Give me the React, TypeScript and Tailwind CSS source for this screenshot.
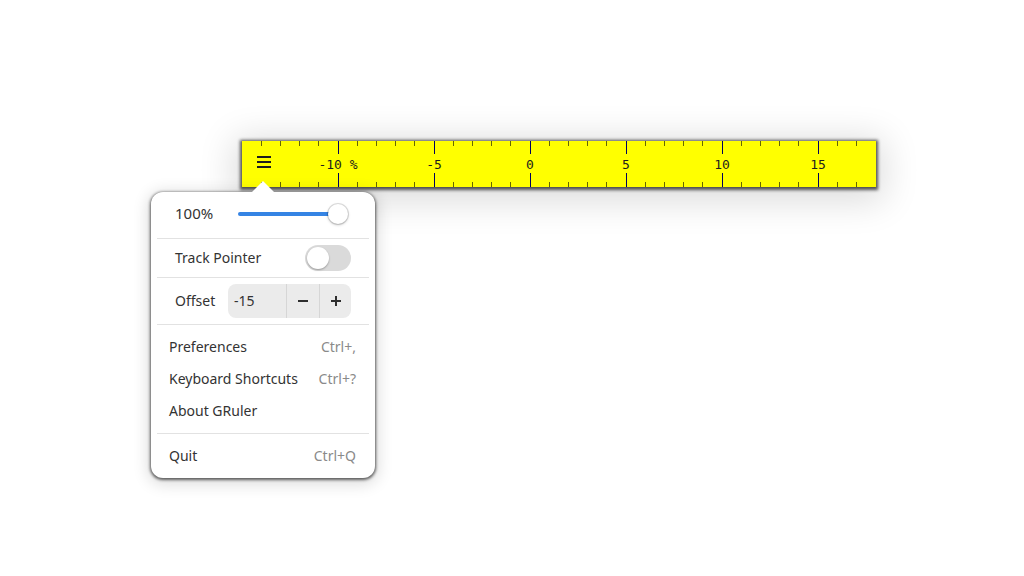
import React from "react";

const UNIT = 19.2;
const ZERO = 288;

function RulerScale() {
  const ticks = [];
  for (let k = -14; k <= 17; k++) {
    const x = ZERO + k * UNIT;
    const major = k % 5 === 0;
    ticks.push(
      <g key={k}>
        <line
          x1={x}
          x2={x}
          y1={0}
          y2={major ? 13 : 5}
          stroke={major ? "#000060" : "rgba(0,0,0,0.6)"}
          strokeWidth={1}
        />
        <line
          x1={x}
          x2={x}
          y1={major ? 32 : 41}
          y2={46}
          stroke={major ? "#000060" : "rgba(0,0,0,0.6)"}
          strokeWidth={1}
        />
      </g>,
    );
  }
  const labels = [
    { v: -10, t: "-10 %" },
    { v: -5, t: "-5" },
    { v: 0, t: "0" },
    { v: 5, t: "5" },
    { v: 10, t: "10" },
    { v: 15, t: "15" },
  ];
  return (
    <svg
      className="absolute inset-0"
      width={634}
      height={46}
      viewBox="0 0 634 46"
      shapeRendering="crispEdges"
    >
      {ticks}
      {labels.map((l) => (
        <rect
          key={"bg" + l.v}
          x={ZERO + l.v * UNIT - l.t.length * 4 - 1}
          y={14}
          width={l.t.length * 8 + 2}
          height={18}
          fill="#ffff00"
        />
      ))}
      {labels.map((l) => (
        <text
          key={l.v}
          x={ZERO + l.v * UNIT}
          y={28}
          textAnchor="middle"
          fontFamily="'DejaVu Sans Mono', monospace"
          fontSize={13}
          fill="#1e1e1e"
        >
          {l.t}
        </text>
      ))}
    </svg>
  );
}

function Separator() {
  return <div className="h-px bg-[#e2e2e2]" />;
}

function MenuItem({ label, accel }: { label: string; accel?: string }) {
  return (
    <div className="flex items-center justify-between h-[32px] pl-[12px] pr-[13px] pb-[2px] rounded-[6px]">
      <span>{label}</span>
      {accel && <span className="text-[#8a8a8a]">{accel}</span>}
    </div>
  );
}

export default function App() {
  return (
    <div
      className="relative w-[1024px] h-[576px] bg-white overflow-hidden text-[14px] text-[#333333]"
      style={{ fontFamily: "'Noto Sans', sans-serif" }}
    >
      <div className="pt-[141px] pl-[242px]">
        <div className="relative w-[634px] h-[46px] bg-[#ffff00] shadow-[0_1px_3px_2px_rgba(0,0,0,0.65),0_6px_36px_8px_rgba(0,0,0,0.14)]">
          <RulerScale />
          <div className="relative flex flex-col gap-[3px] pl-[15px] pt-[15px]">
            <div className="w-[14px] h-[2px] bg-[#1e1e1e]" />
            <div className="w-[14px] h-[2px] bg-[#1e1e1e]" />
            <div className="w-[14px] h-[2px] bg-[#1e1e1e]" />
          </div>
        </div>
      </div>

      <div className="absolute left-[151px] top-[192px] w-[224px] rounded-[12px] bg-white p-[6px] shadow-[0_1px_3px_1px_rgba(0,0,0,0.6),0_3px_16px_3px_rgba(0,0,0,0.14)]">
        <svg
          className="absolute -top-[12px] left-[100px]"
          width={24}
          height={13}
          viewBox="0 0 24 13"
        >
          <path d="M0 13 L12 1 L24 13 Z" fill="#ffffff" />
        </svg>

        <div className="flex items-center h-[32px] pl-[18px] pb-[2px]">
          <span className="text-[15px]">100%</span>
          <div className="flex items-center w-[110px] ml-[25px] pt-[2px]">
            <div className="flex-1 h-[4px] rounded-full bg-[#3584e4]" />
            <div className="-ml-[10px] w-[20px] h-[20px] rounded-full bg-white shadow-[0_0_0_1px_rgba(0,0,0,0.12),0_1px_3px_rgba(0,0,0,0.25)]" />
          </div>
        </div>
        <div className="mt-[8px]">
          <Separator />
        </div>

        <div className="flex items-center justify-between h-[38px] pl-[18px] pr-[18px]">
          <span className="pb-[2px]">Track Pointer</span>
          <div className="flex items-center w-[46px] h-[26px] rounded-full bg-[#dadada] px-[2px]">
            <div className="w-[22px] h-[22px] rounded-full bg-white shadow-[0_1px_2px_rgba(0,0,0,0.3)]" />
          </div>
        </div>
        <Separator />

        <div className="flex items-center justify-between h-[46px] pl-[18px] pr-[18px]">
          <span className="pb-[2px]">Offset</span>
          <div className="flex h-[34px] w-[123px] rounded-[8px] bg-[#ebebeb]">
            <div className="flex items-center w-[58px] pl-[6px] pb-[2px]">-15</div>
            <div className="w-px bg-[#d6d6d6]" />
            <div className="flex items-center justify-center w-[32px]">
              <svg width={16} height={16} viewBox="0 0 16 16">
                <path d="M3 8 H13" stroke="#2e2e2e" strokeWidth={2} />
              </svg>
            </div>
            <div className="w-px bg-[#d6d6d6]" />
            <div className="flex items-center justify-center flex-1">
              <svg width={16} height={16} viewBox="0 0 16 16">
                <path d="M3 8 H13 M8 3 V13" stroke="#2e2e2e" strokeWidth={2} />
              </svg>
            </div>
          </div>
        </div>
        <Separator />

        <div className="pt-[6px]">
          <MenuItem label="Preferences" accel="Ctrl+," />
          <MenuItem label="Keyboard Shortcuts" accel="Ctrl+?" />
          <MenuItem label="About GRuler" />
        </div>
        <div className="mt-[6px]">
          <Separator />
        </div>
        <div className="pt-[6px]">
          <MenuItem label="Quit" accel="Ctrl+Q" />
        </div>
      </div>
    </div>
  );
}
